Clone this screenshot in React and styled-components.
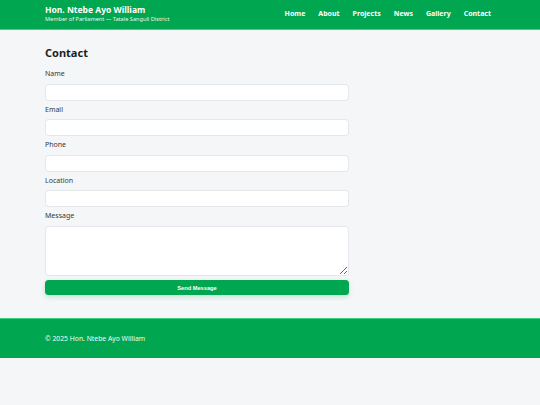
import styled, { createGlobalStyle } from "styled-components";

// 의원 홈페이지 - 연락처 페이지

const GlobalStyle = createGlobalStyle`
  html, body {
    margin: 0;
    padding: 0;
    background: #f5f6f8;
    font-family: "Noto Sans", "Open Sans", sans-serif;
    color: #1f2328;
  }
  * { box-sizing: border-box; }
`;

const green = "#00a650";

// 상단 헤더
const Header = styled.header`
  background: ${green};
  border-bottom: 1.5px solid #3dd07f;
  height: 30px;
  padding: 0 49px 2px 45px;
  display: flex;
  align-items: center;
  justify-content: space-between;
`;

const Brand = styled.div`
  display: flex;
  flex-direction: column;
  color: #fff;
`;

const BrandName = styled.div`
  font-size: 8.5px;
  font-weight: 700;
  line-height: 11px;
`;

const BrandSub = styled.div`
  font-size: 5.6px;
  line-height: 9px;
  opacity: 0.92;
`;

const Nav = styled.nav`
  display: flex;
  gap: 13px;
`;

const NavLink = styled.a`
  color: #fff;
  font-size: 7px;
  font-weight: 700;
  text-decoration: none;
`;

// 본문
const Main = styled.main`
  padding: 15px 45px 23px;
`;

const Title = styled.h1`
  margin: 0 0 9px;
  font-size: 11px;
  line-height: 15px;
  font-weight: 700;
  color: #1b1f24;
`;

const Form = styled.form`
  width: 304px;
  display: flex;
  flex-direction: column;
`;

const Field = styled.div`
  margin-bottom: 4px;
`;

const Label = styled.label`
  display: block;
  font-size: 7px;
  line-height: 10px;
  margin-bottom: 4.5px;
  color: #34393f;
`;

const Input = styled.input`
  display: block;
  width: 100%;
  height: 17px;
  border: 1px solid #e3e6ea;
  border-radius: 3.5px;
  background: #fff;
  outline: none;
`;

const TextArea = styled.textarea`
  display: block;
  width: 100%;
  height: 50px;
  border: 1px solid #e3e6ea;
  border-radius: 3.5px;
  background: #fff;
  outline: none;
  resize: vertical;
`;

const Button = styled.button`
  margin-top: 0.5px;
  height: 15px;
  border: none;
  border-radius: 3.5px;
  background: ${green};
  color: #fff;
  font-family: "Liberation Sans", Arial, sans-serif;
  font-size: 5.7px;
  font-weight: 700;
  box-shadow: 0 2px 5px rgba(0, 166, 80, 0.22);
  cursor: pointer;
`;

// 하단 푸터
const Footer = styled.footer`
  background: ${green};
  border-top: 1.5px solid #3dd07f;
  height: 40px;
  padding: 0 45px;
  display: flex;
  align-items: center;
  color: #f0fff6;
  font-size: 6.8px;
`;

const links = ["Home", "About", "Projects", "News", "Gallery", "Contact"];
const fields = ["Name", "Email", "Phone", "Location"];

const App = () => {
  return (
    <>
      <GlobalStyle />
      <Header>
        <Brand>
          <BrandName>Hon. Ntebe Ayo William</BrandName>
          <BrandSub>Member of Parliament — Tatale Sanguli District</BrandSub>
        </Brand>
        <Nav>
          {links.map((l) => (
            <NavLink key={l} href="#">
              {l}
            </NavLink>
          ))}
        </Nav>
      </Header>
      <Main>
        <Title>Contact</Title>
        <Form onSubmit={(e) => e.preventDefault()}>
          {fields.map((f) => (
            <Field key={f}>
              <Label>{f}</Label>
              <Input type="text" />
            </Field>
          ))}
          <Field>
            <Label>Message</Label>
            <TextArea />
          </Field>
          <Button type="submit">Send Message</Button>
        </Form>
      </Main>
      <Footer>© 2025 Hon. Ntebe Ayo William</Footer>
    </>
  );
};

export default App;
